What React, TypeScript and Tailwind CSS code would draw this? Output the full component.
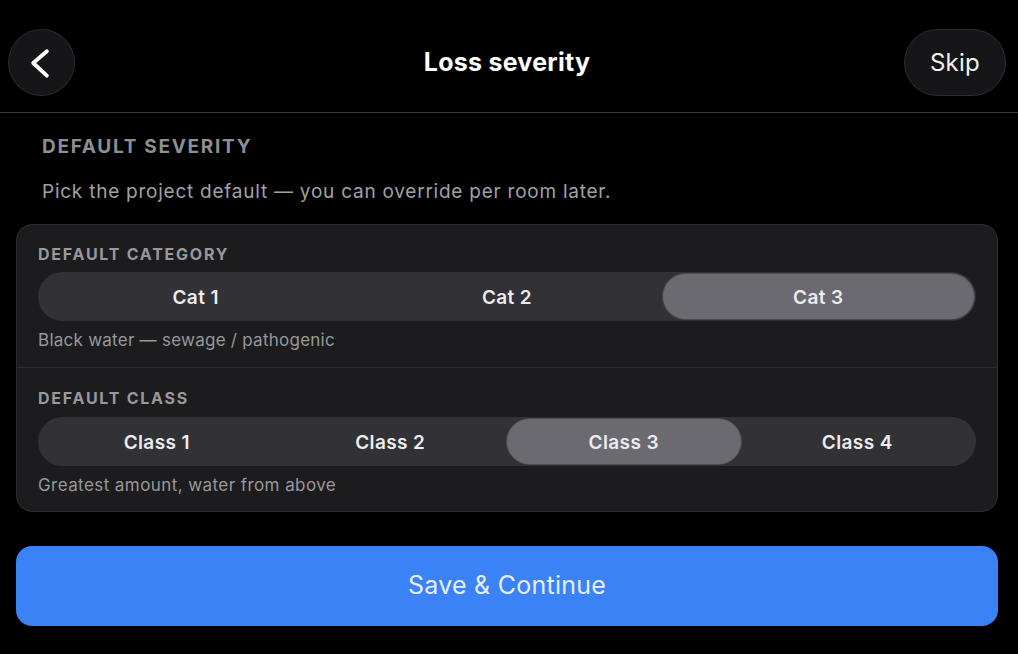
import { useState } from "react";

const categories = [
  { id: "cat1", label: "Cat 1", hint: "Clean water — sanitary source" },
  { id: "cat2", label: "Cat 2", hint: "Grey water — significant contamination" },
  { id: "cat3", label: "Cat 3", hint: "Black water — sewage / pathogenic" },
];

const classes = [
  { id: "c1", label: "Class 1", hint: "Least amount, minimal absorption" },
  { id: "c2", label: "Class 2", hint: "Large amount, carpet and cushion wet" },
  { id: "c3", label: "Class 3", hint: "Greatest amount, water from above" },
  { id: "c4", label: "Class 4", hint: "Specialty drying, low-permeance materials" },
];

function Segmented({ items, value, onChange }: { items: { id: string; label: string }[]; value: string; onChange: (id: string) => void }) {
  return (
    <div className="flex h-[49px] rounded-full bg-[#313136] p-[2px]">
      {items.map((it) => (
        <button
          key={it.id}
          onClick={() => onChange(it.id)}
          className={
            "flex-1 rounded-full pt-[3px] text-[19px] font-semibold tracking-[0.02em] text-[#ececee] " +
            (it.id === value ? "bg-[#6b6a70] shadow-[0_0_0_1px_#4a4a4f]" : "")
          }
        >
          {it.label}
        </button>
      ))}
    </div>
  );
}

export default function App() {
  const [cat, setCat] = useState("cat3");
  const [cls, setCls] = useState("c3");

  return (
    <div className="min-h-[654px] bg-black text-white" style={{ fontFamily: "Inter, 'Noto Sans', sans-serif" }}>
      <header className="grid grid-cols-[1fr_auto_1fr] items-center border-b border-[#3a3a3c] pl-[8px] pr-[12px] pt-[29px] pb-[16px]">
        <button className="flex h-[67px] w-[67px] items-center justify-center rounded-full border border-[#2e2e30] bg-[#161618]">
          <svg width="67" height="67" viewBox="0 0 67 67" fill="none">
            <polyline points="39,22 25,34 39,47" stroke="white" strokeWidth="4" strokeLinecap="round" strokeLinejoin="round" />
          </svg>
        </button>
        <h1 className="text-[25px] font-bold tracking-[0.01em]">Loss severity</h1>
        <div className="flex justify-end">
          <button className="h-[67px] w-[102px] rounded-full border border-[#2e2e30] bg-[#161618] text-[24px] tracking-[0.01em] text-[#f2f2f2]">Skip</button>
        </div>
      </header>

      <div className="pl-[16px] pr-[20px]">
        <div className="px-[26px] pt-[22px]">
          <div className="text-[19px] font-bold leading-[24px] tracking-[0.09em] text-[#8e8e93]">DEFAULT SEVERITY</div>
          <p className="mt-[21px] text-[19px] leading-[24px] tracking-[0.04em] text-[#a1a1a6]">Pick the project default — you can override per room later.</p>
        </div>

        <div className="mt-[20px] rounded-[16px] border border-[#2c2c2e] bg-[#1c1c1e]">
          <div className="border-b border-[#2c2c2e] px-[21px] pt-[19px] pb-[17px]">
            <div className="text-[16px] font-bold leading-[20px] tracking-[0.11em] text-[#98989d]">DEFAULT CATEGORY</div>
            <div className="mt-[8px]">
              <Segmented items={categories} value={cat} onChange={setCat} />
            </div>
            <div className="mt-[9px] text-[17px] leading-[20px] tracking-[0.015em] text-[#98989d]">{categories.find((c) => c.id === cat)?.hint}</div>
          </div>
          <div className="px-[21px] pt-[20px] pb-[16px]">
            <div className="text-[16px] font-bold leading-[20px] tracking-[0.11em] text-[#98989d]">DEFAULT CLASS</div>
            <div className="mt-[9px]">
              <Segmented items={classes} value={cls} onChange={setCls} />
            </div>
            <div className="mt-[9px] text-[17px] leading-[20px] tracking-[0.025em] text-[#98989d]">{classes.find((c) => c.id === cls)?.hint}</div>
          </div>
        </div>

        <button className="mt-[34px] h-[80px] w-full rounded-[16px] bg-[#3b82f6] text-[25px] tracking-[0.01em] text-[#e6eefc]">Save &amp; Continue</button>
      </div>
    </div>
  );
}
